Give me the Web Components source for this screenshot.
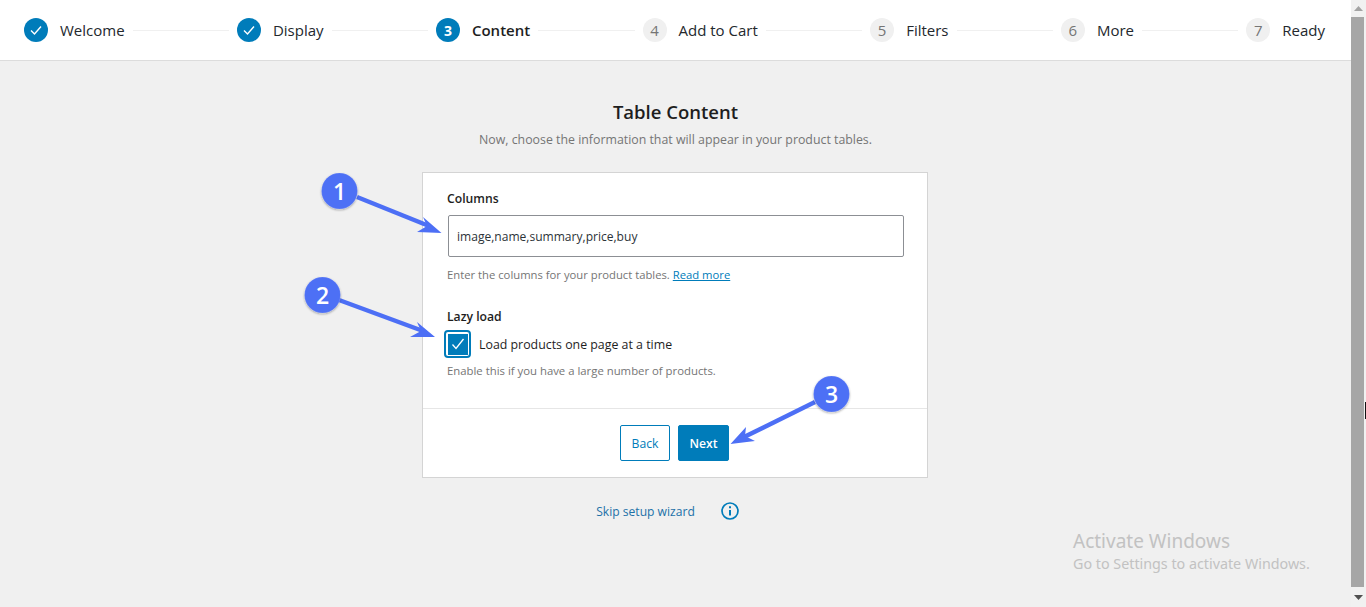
<!DOCTYPE html>
<html lang="en">
<head>
<meta charset="utf-8">
<title>Table Content</title>
<style>
  html, body { margin: 0; height: 100%; overflow: hidden; }
  body { font-family: "Open Sans", "Noto Sans", sans-serif; background: #f0f0f0; color: #23282d; }
</style>
</head>
<body>
<wizard-page>
  <wizard-steps slot="header">
    <wizard-step state="done" label="Welcome"></wizard-step>
    <wizard-step state="done" label="Display"></wizard-step>
    <wizard-step state="active" num="3" label="Content"></wizard-step>
    <wizard-step num="4" label="Add to Cart"></wizard-step>
    <wizard-step num="5" label="Filters"></wizard-step>
    <wizard-step num="6" label="More"></wizard-step>
    <wizard-step num="7" label="Ready" last></wizard-step>
  </wizard-steps>

  <wizard-card heading="Table Content" sub="Now, choose the information that will appear in your product tables.">
    <text-field label="Columns" value="image,name,summary,price,buy">
      Enter the columns for your product tables. <a href="#">Read more</a>
    </text-field>
    <check-field label="Lazy load" text="Load products one page at a time">
      Enable this if you have a large number of products.
    </check-field>
    <wizard-button slot="actions">Back</wizard-button>
    <wizard-button slot="actions" primary>Next</wizard-button>
  </wizard-card>

  <skip-link></skip-link>
  <activate-notice></activate-notice>
</wizard-page>
<call-outs></call-outs>

<script>
// small helper so each class only has to give its html
class Base extends HTMLElement {
  render(html) {
    this.attachShadow({ mode: 'open' });
    this.shadowRoot.innerHTML = html;
  }
}

class WizardPage extends Base {
  constructor() {
    super();
    this.render(`
      <style>
        :host { display: flex; height: 607px; }
        .main { flex: 1; min-width: 0; display: flex; flex-direction: column; }
        .bar { width: 15px; flex: none; background: #f1f1f1; display: flex; flex-direction: column; align-items: center; }
        .thumb { width: 13px; flex: 1; background: #a6a6a6; margin: 0 2px 0 0; }
        .up, .down { height: 17px; flex: none; display: flex; align-items: center; justify-content: center; }
        .up svg { fill: #a3a3a3; } .down { height: 20px; } .down svg { fill: #505050; }
      </style>
      <div class="main"><slot name="header"></slot><slot></slot></div>
      <div class="bar">
        <div class="up"><svg width="9" height="5" viewBox="0 0 9 5"><path d="M4.5 0 9 5H0z"/></svg></div>
        <div class="thumb"></div>
        <div class="down"><svg width="9" height="5" viewBox="0 0 9 5"><path d="M0 0h9L4.500 5z"/></svg></div>
      </div>`);
  }
}

class WizardSteps extends Base {
  constructor() {
    super();
    this.render(`
      <style>
        :host { display: flex; box-sizing: border-box; height: 61px; padding: 0 26px 0 24px; align-items: center;
                background: #fff; border-bottom: 1px solid #dcdcdc; }
      </style>
      <slot></slot>`);
  }
}

class WizardStep extends Base {
  constructor() {
    super();
    const state = this.getAttribute('state');
    const inner = state === 'done'
      ? '<svg width="14" height="14" viewBox="0 0 14 14"><path d="M2 7.500 5.500 11 12 3.500" fill="none" stroke="#fff" stroke-width="1.400"/></svg>'
      : this.getAttribute('num');
    this.render(`
      <style>
        :host { display: flex; align-items: center; flex: ${this.hasAttribute('last') ? '0 0 auto' : '1 1 auto'}; }
        .dot { width: 24px; height: 24px; border-radius: 50%; flex: none; display: flex; align-items: center; justify-content: center;
               font-size: 15px; background: #f0f0f0; color: #757575; margin-right: 12px; }
        .done, .active { background: #007cba; color: #fff; }
        .active { font-weight: 700; font-size: 14px; }
        .label { font-size: 15px; color: #23282d; white-space: nowrap; margin-right: 8px; }
        .label.active-label { font-weight: 600; color: #1e1e1e; background: none; }
        .line { flex: 1; height: 1px; background: #f0f0f0; margin-right: 8px; }
        :host([last]) .label { margin-right: 0; }
        :host([last]) .line { display: none; }
      </style>
      <span class="dot ${state || ''}">${inner}</span>
      <span class="label ${state === 'active' ? 'active-label' : ''}">${this.getAttribute('label')}</span>
      <span class="line"></span>`);
  }
}

class WizardCard extends Base {
  constructor() {
    super();
    this.render(`
      <style>
        :host { display: block; }
        h1 { margin: 38px 0 0; font-size: 18.500px; line-height: 26px; font-weight: 600; text-align: center; color: #1e1e1e; }
        p { margin: 4px 0 0; font-size: 12.350px; line-height: 22px; text-align: center; color: #757575; }
        .card { box-sizing: border-box; width: 506px; height: 306px; margin: 21px 0 0 422px; background: #fff; border: 1px solid #d4d4d4;
                display: flex; flex-direction: column; }
        .body { flex: 1; padding: 17px 24px 0; display: flex; flex-direction: column; gap: 20px; }
        .foot { height: 69px; flex: none; box-sizing: border-box; border-top: 1px solid #e6e6e6; display: flex; justify-content: center;
                gap: 8px; padding: 16px 1px 0 0; }
      </style>
      <h1>${this.getAttribute('heading')}</h1>
      <p>${this.getAttribute('sub')}</p>
      <div class="card">
        <div class="body"><slot></slot></div>
        <div class="foot"><slot name="actions"></slot></div>
      </div>`);
  }
}

class TextField extends Base {
  constructor() {
    super();
    this.render(`
      <style>
        :host { display: block; }
        label { display: block; font-size: 12.200px; line-height: 18px; font-weight: 600; color: #1e1e1e; }
        .input { box-sizing: border-box; height: 42px; width: 456px; margin: 7px 0 0 1px; border: 1px solid #8c8f94; border-radius: 2px;
                 padding: 0 8px; display: flex; align-items: center; font-size: 12.050px; color: #2c3338; }
        .hint { margin-top: 9px; font-size: 11.270px; line-height: 17px; color: #757575; }
        ::slotted(a) { color: #007cba; }
      </style>
      <label>${this.getAttribute('label')}</label>
      <div class="input">${this.getAttribute('value')}</div>
      <div class="hint"><slot></slot></div>`);
  }
}

class CheckField extends Base {
  constructor() {
    super();
    this.render(`
      <style>
        :host { display: block; margin-top: 5px; }
        label { display: block; font-size: 12.200px; line-height: 18px; font-weight: 600; color: #1e1e1e; }
        .row { display: flex; align-items: center; gap: 8px; margin: 4px 0 0 -3px; font-size: 12.370px; color: #1e1e1e; }
        .box { box-sizing: border-box; width: 27px; height: 28px; flex: none; border: 2px solid #007cba; border-radius: 4px; padding: 1.500px; background: #fff; }
        .tick { width: 100%; height: 100%; background: #007cba; display: flex; align-items: center; justify-content: center; }
        .hint { margin-top: 4px; font-size: 11.350px; line-height: 17px; color: #757575; }
      </style>
      <label>${this.getAttribute('label')}</label>
      <div class="row">
        <span class="box"><span class="tick"><svg width="14" height="14" viewBox="0 0 14 14"><path d="M1.500 7.500 5 11.500 12.500 2" fill="none" stroke="#fff" stroke-width="1.300"/></svg></span></span>
        ${this.getAttribute('text')}
      </div>
      <div class="hint"><slot></slot></div>`);
  }
}

class WizardButton extends Base {
  constructor() {
    super();
    this.render(`
      <style>
        :host { display: flex; box-sizing: border-box; width: 50px; height: 36px; align-items: center; justify-content: center; border: 1px solid #007cba;
                border-radius: 2px; font-size: 12.200px; color: #007cba; background: #fff; }
        :host([primary]) { width: 51px; background: #007cba; color: #fff; font-weight: 600; }
      </style>
      <slot></slot>`);
  }
}

class SkipLink extends Base {
  constructor() {
    super();
    this.render(`
      <style>
        :host { display: flex; justify-content: center; align-items: center; gap: 25px; margin-top: 23px; padding-right: 15px;
                font-size: 12.100px; color: #2271a8; }
        svg { display: block; }
      </style>
      <span>Skip setup wizard</span>
      <svg width="20" height="20" viewBox="0 0 20 20" fill="none" stroke="#007cba">
        <circle cx="10" cy="10" r="8" stroke-width="1.700"/>
        <path d="M10 9v5.500" stroke-width="2"/><path d="M10 5.300v2" stroke-width="2"/>
      </svg>`);
  }
}

class ActivateNotice extends Base {
  constructor() {
    super();
    this.render(`
      <style>
        :host { position: absolute; left: 1073px; top: 528px; color: #c2c2c2; white-space: nowrap; font-family: "Noto Sans", sans-serif; }
        .a { font-size: 19px; line-height: 26px; }
        .b { font-size: 14.300px; line-height: 20px; }
      </style>
      <div class="a">Activate Windows</div>
      <div class="b">Go to Settings to activate Windows.</div>`);
  }
}

// numbered arrows that were painted over the screenshot
class CallOuts extends Base {
  constructor() {
    super();
    const blue = '#4d6ff5';
    const items = [
      { n: 1, cx: 339.500, cy: 191, shaft: '357,197 429,226', head: '441.500,233 423,217 427,226 417,232' },
      { n: 2, cx: 322.500, cy: 295, shaft: '339,300 423,331', head: '435,337 417,322 421,331 410,337' },
      { n: 3, cx: 831.500, cy: 394, shaft: '815,402 742,438', head: '730.500,444 746,427 745,436 755,441' }
    ];
    const art = items.map(i => `
      <polyline points="${i.shaft}" fill="none" stroke="${blue}" stroke-width="4.500"/>
      <polygon points="${i.head}" fill="${blue}"/>
      <circle cx="${i.cx}" cy="${i.cy}" r="18" fill="${blue}" stroke="#fff" stroke-opacity=".15" filter="url(#s)"/>
      <text x="${i.cx}" y="${i.cy + 8.500}" text-anchor="middle">${i.n}</text>`).join('');
    this.render(`
      <style>
        :host { position: absolute; left: 0; top: 0; width: 1366px; height: 607px; pointer-events: none; }
        svg { display: block; }
        text { font: 600 23px "Open Sans", sans-serif; fill: #fff; }
        .cursor { fill: #111; }
      </style>
      <svg width="1366" height="607">
        <defs><filter id="s" x="-20%" y="-20%" width="140%" height="140%"><feDropShadow dx="0" dy="1" stdDeviation="1" flood-opacity=".35"/></filter></defs>
        ${art}
        <rect class="cursor" x="1365" y="402" width="1" height="17"/>
      </svg>`);
  }
}

customElements.define('wizard-page', WizardPage);
customElements.define('wizard-steps', WizardSteps);
customElements.define('wizard-step', WizardStep);
customElements.define('wizard-card', WizardCard);
customElements.define('text-field', TextField);
customElements.define('check-field', CheckField);
customElements.define('wizard-button', WizardButton);
customElements.define('skip-link', SkipLink);
customElements.define('activate-notice', ActivateNotice);
customElements.define('call-outs', CallOuts);
</script>
</body>
</html>
